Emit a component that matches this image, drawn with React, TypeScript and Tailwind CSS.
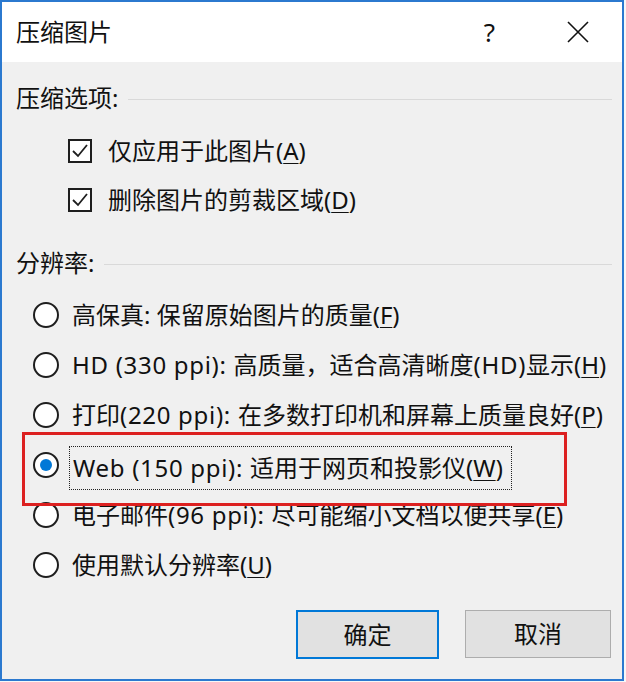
import React from 'react';

const font = "font-['Noto_Sans','Noto_Sans_CJK_SC',sans-serif]";

// Latin runs come out a bit narrow next to the reference, so widen them slightly
const Text = ({ s }: { s: string }) => (
  <>
    {s.split(/([\x20-\x7e]+)/).map((part, i) =>
      /[A-Za-z0-9]/.test(part) ? (
        <span key={i} className="tracking-[0.7px]">
          {part}
        </span>
      ) : (
        <React.Fragment key={i}>{part}</React.Fragment>
      )
    )}
  </>
);

const Key = ({ k }: { k: string }) => (
  <>
    (<span className="underline decoration-1 underline-offset-[3px]">{k}</span>)
  </>
);

const Checkbox = ({ label, k }: { label: string; k: string }) => (
  <div className="h-[49px] flex items-center pl-[66px]">
    <div className="w-[24px] h-[24px] border-2 border-[#1e1e1e] bg-white flex items-center justify-center">
      <svg width="20" height="20" viewBox="0 0 20 20">
        <polyline points="3,10 8,15 17,4" fill="none" stroke="#1e1e1e" strokeWidth="1.8" />
      </svg>
    </div>
    <span className="ml-[16px]">
      {label}
      <Key k={k} />
    </span>
  </div>
);

const Radio = ({ label, k, checked }: { label: string; k: string; checked?: boolean }) => (
  <div className="h-[50px] flex items-center pl-[31px]">
    <div className="w-[26px] h-[26px] rounded-full border-2 border-[#1e1e1e] bg-white flex items-center justify-center shrink-0">
      {checked && <div className="w-[12px] h-[12px] rounded-full bg-[#0078d7]" />}
    </div>
    {checked ? (
      <div className="ml-[10px] h-[44px] mt-[6px] pl-[3px] pr-[8px] flex items-center border border-dotted border-[#222] whitespace-nowrap">
        <span>
          <Text s={label} />
          <Key k={k} />
        </span>
      </div>
    ) : (
      <span className="ml-[13px] whitespace-nowrap">
        <Text s={label} />
        <Key k={k} />
      </span>
    )}
  </div>
);

const Section = ({ title }: { title: string }) => (
  <div className="h-[32px] flex items-center pl-[14px] pr-[10px]">
    <span>{title}</span>
    <div className="flex-1 h-px bg-[#d9d9d9] ml-[10px] mt-[2px]" />
  </div>
);

export default function App() {
  return (
    <div className={`w-[626px] h-[682px] bg-[#f7f7f7] ${font} text-[24px] text-[#111] leading-none`}>
      <div className="relative w-[624px] h-[681px] border-2 border-[#2b79cf] bg-[#f0f0f0] flex flex-col">
        <div className="h-[60px] bg-white flex items-center pl-[14px]">
          <span>压缩图片</span>
          <div className="flex-1" />
          <span className="mr-[72px] text-[26px]">?</span>
          <svg width="22" height="22" viewBox="0 0 22 22" className="mr-[33px]">
            <path d="M1 1 L21 21 M21 1 L1 21" stroke="#111" strokeWidth="1.6" />
          </svg>
        </div>

        <div className="pt-[20px]">
          <Section title="压缩选项:" />
          <div className="mt-[12px]">
            <Checkbox label="仅应用于此图片" k="A" />
            <Checkbox label="删除图片的剪裁区域" k="D" />
          </div>

          <div className="mt-[23px]">
            <Section title="分辨率:" />
          </div>
          <div className="mt-[11px]">
            <Radio label="高保真: 保留原始图片的质量" k="F" />
            <Radio label="HD (330 ppi): 高质量，适合高清晰度(HD)显示" k="H" />
            <Radio label="打印(220 ppi): 在多数打印机和屏幕上质量良好" k="P" />
            <Radio label="Web (150 ppi): 适用于网页和投影仪" k="W" checked />
            <Radio label="电子邮件(96 ppi): 尽可能缩小文档以便共享" k="E" />
            <Radio label="使用默认分辨率" k="U" />
          </div>

          <div className="mt-[20px] flex justify-end gap-[26px] pr-[11px]">
            <button className="w-[143px] h-[49px] bg-[#e1e1e1] border-2 border-[#0078d7]">确定</button>
            <button className="w-[146px] h-[48px] bg-[#e1e1e1] border border-[#adadad]">取消</button>
          </div>
        </div>

        {/* red annotation box */}
        <div className="absolute left-[20px] top-[430px] w-[545px] h-[74px] border-[3px] border-[#dc2020]" />
      </div>
    </div>
  );
}
